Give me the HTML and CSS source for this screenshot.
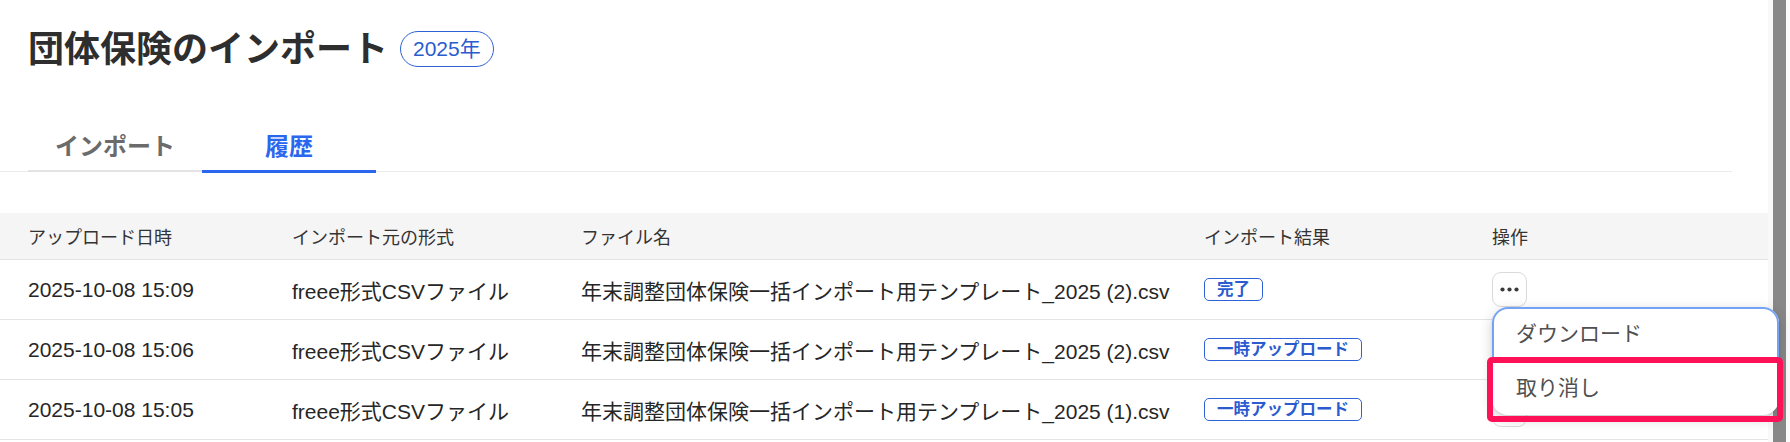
FILE: index.html
```html
<!DOCTYPE html>
<html lang="ja">
<head>
<meta charset="utf-8">
<title>団体保険のインポート</title>
<link rel="stylesheet" href="styles.css">
</head>
<body>
<div class="page">
  <div class="main">
    <div class="title-row">
      <h1 class="title">団体保険のインポート</h1>
      <span class="year-badge">2025年</span>
    </div>
    <div class="tabs">
      <div class="tab">インポート</div>
      <div class="tab tab-active">履歴</div>
    </div>
    <table class="history">
      <colgroup>
        <col class="c1"><col class="c2"><col class="c3"><col class="c4"><col class="c5">
      </colgroup>
      <thead>
        <tr><th>アップロード日時</th><th>インポート元の形式</th><th>ファイル名</th><th>インポート結果</th><th>操作</th></tr>
      </thead>
      <tbody>
        <tr>
          <td>2025-10-08 15:09</td>
          <td>freee形式CSVファイル</td>
          <td>年末調整団体保険一括インポート用テンプレート_2025 (2).csv</td>
          <td><span class="status">完了</span></td>
          <td class="ops">
            <button class="more" type="button"><svg width="35" height="35" viewBox="0 0 35 35"><circle cx="10.5" cy="17.5" r="2.1"/><circle cx="17.5" cy="17.5" r="2.1"/><circle cx="24.5" cy="17.5" r="2.1"/></svg></button>
            <div class="menu">
              <div class="menu-item menu-item-focus">ダウンロード</div>
              <div class="menu-item">取り消し</div>
            </div>
            <div class="highlight"></div>
          </td>
        </tr>
        <tr>
          <td>2025-10-08 15:06</td>
          <td>freee形式CSVファイル</td>
          <td>年末調整団体保険一括インポート用テンプレート_2025 (2).csv</td>
          <td><span class="status">一時アップロード</span></td>
          <td class="ops"><button class="more" type="button"><svg width="35" height="35" viewBox="0 0 35 35"><circle cx="10.5" cy="17.5" r="2.1"/><circle cx="17.5" cy="17.5" r="2.1"/><circle cx="24.5" cy="17.5" r="2.1"/></svg></button></td>
        </tr>
        <tr>
          <td>2025-10-08 15:05</td>
          <td>freee形式CSVファイル</td>
          <td>年末調整団体保険一括インポート用テンプレート_2025 (1).csv</td>
          <td><span class="status">一時アップロード</span></td>
          <td class="ops"><button class="more" type="button"><svg width="35" height="35" viewBox="0 0 35 35"><circle cx="10.5" cy="17.5" r="2.1"/><circle cx="17.5" cy="17.5" r="2.1"/><circle cx="24.5" cy="17.5" r="2.1"/></svg></button></td>
        </tr>
      </tbody>
    </table>
  </div>
  <div class="gutter"></div>
  <div class="scrollbar"></div>
  <div class="scroll-edge"></div>
</div>
</body>
</html>
```

FILE: styles.css
```css
html, body {
  margin: 0;
  padding: 0;
  background: #ffffff;
  overflow: hidden;
}
body {
  font-family: "Liberation Sans", "Noto Sans CJK JP", sans-serif;
  color: #2b2b2b;
}
.page {
  display: flex;
  width: 1790px;
  height: 442px;
  position: relative;
}
.main {
  width: 1768px;
  flex: none;
  position: relative;
}
.gutter {
  width: 5px;
  background: #f8f8f8;
}
.scrollbar {
  width: 13px;
  background: #888888;
}
.scroll-edge {
  width: 4px;
  background: #fbfbfb;
}
.title-row {
  display: flex;
  align-items: center;
  height: 36px;
  margin-top: 30px;
  padding-left: 28px;
}
.title {
  margin: 0;
  font-size: 36px;
  line-height: 36px;
  font-weight: 700;
  color: #2e2e2e;
  position: relative;
  top: 2px;
}
.year-badge {
  margin-left: 12px;
  box-sizing: border-box;
  height: 36px;
  padding: 0 12px;
  border: 1px solid #2f62d6;
  border-radius: 18px;
  color: #2a5bcf;
  font-size: 21px;
  line-height: 34px;
  position: relative;
  top: 1px;
}
.tabs {
  display: flex;
  align-items: flex-start;
  width: 1704px;
  margin-top: 54px;
  padding-left: 28px;
  border-bottom: 1px solid #ebebeb;
}
.tab {
  width: 174px;
  text-align: center;
  font-size: 24px;
  line-height: 24px;
  font-weight: 700;
  color: #6b6b6b;
  padding: 15px 0 11px;
  border-bottom: 2px solid #e3e3e3;
  margin-bottom: -1px;
}
.tab-active {
  color: #2b66ef;
  border-bottom: 3px solid #2b66ef;
  margin-bottom: -2px;
}
.history {
  margin-top: 41px;
  width: 1768px;
  table-layout: fixed;
  border-collapse: collapse;
}
.c1 { width: 292px; }
.c2 { width: 289px; }
.c3 { width: 623px; }
.c4 { width: 288px; }
.c5 { width: 276px; }
.history th {
  height: 46px;
  padding: 0;
  background: #f6f5f5;
  border-bottom: 1px solid #e4e4e4;
  text-align: left;
  font-weight: 400;
  font-size: 18px;
  color: #333333;
  white-space: nowrap;
}
.history td {
  height: 59px;
  padding: 0;
  border-bottom: 1px solid #e4e4e4;
  font-size: 21px;
  color: #262626;
  white-space: nowrap;
}
.history th:first-child,
.history td:first-child {
  padding-left: 28px;
}
.status {
  display: inline-block;
  box-sizing: border-box;
  height: 23px;
  padding: 0 12px;
  border: 1px solid #2f62d6;
  border-radius: 5px;
  font-size: 16.5px;
  line-height: 21px;
  font-weight: 700;
  color: #2a5bcf;
  vertical-align: middle;
  position: relative;
  top: -1px;
}
.ops {
  position: relative;
}
.more {
  display: block;
  width: 35px;
  height: 35px;
  padding: 0;
  border: 1px solid #dadada;
  border-radius: 9px;
  background: #ffffff;
  box-sizing: border-box;
}
.more svg {
  display: block;
  margin: -1px;
  fill: #3a3a3a;
}
.menu {
  position: absolute;
  left: 0;
  top: 47px;
  width: 287px;
  height: 108px;
  background: #ffffff;
  border-radius: 16px;
  box-shadow: 0 4px 14px rgba(0, 0, 0, 0.18), 0 1px 3px rgba(0, 0, 0, 0.1);
  z-index: 5;
}
.menu-item {
  height: 54px;
  padding: 0 0 3px 24px;
  display: flex;
  align-items: center;
  font-size: 21px;
  color: #505050;
  box-sizing: border-box;
}
.menu-item-focus {
  height: 53px;
  border-radius: 16px 16px 0 0;
  box-shadow: inset 0 0 0 2px #74a3f6;
}
.highlight {
  position: absolute;
  left: -5px;
  top: 97px;
  width: 296px;
  height: 65px;
  box-sizing: border-box;
  border: 6px solid #fe1157;
  border-radius: 5px;
  z-index: 6;
}
```
